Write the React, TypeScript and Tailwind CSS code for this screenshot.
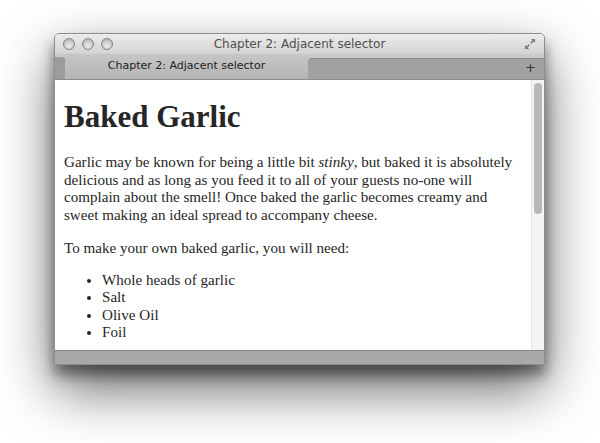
import React from "react";

function TrafficLight() {
  return (
    <span className="block w-[12px] h-[12px] rounded-full border border-[#858585] bg-[radial-gradient(circle_at_50%_70%,#eeeeee,#a9a9a9)]" />
  );
}

function ResizeIcon() {
  return (
    <svg width="12" height="12" viewBox="0 0 12 12" className="block">
      <path d="M7 1h4v4L9.6 3.6 7.4 5.8 6.2 4.6 8.4 2.4z" fill="#7a7a7a" />
      <path d="M5 11H1V7l1.4 1.4 2.2-2.2 1.2 1.2-2.2 2.2z" fill="#7a7a7a" />
    </svg>
  );
}

export default function App() {
  return (
    <div className="w-[600px] h-[443px] bg-white pt-[33px] pl-[54px] overflow-hidden">
      <div className="w-[491px] h-[332px] flex flex-col rounded-t-[5px] border border-[#8d8d8d] shadow-[0_24px_55px_rgba(0,0,0,0.6),0_10px_14px_rgba(0,0,0,0.45)]">
        {/* Title bar */}
        <div className="relative h-[20px] flex items-center px-[8px] rounded-t-[5px] bg-gradient-to-b from-[#ececec] to-[#d3d3d3]">
          <div className="flex items-center gap-[7px]">
            <TrafficLight />
            <TrafficLight />
            <TrafficLight />
          </div>
          <div className="absolute inset-0 flex items-center justify-center text-[12px] text-[#4e4e4e] font-['DejaVu_Sans',sans-serif]">
            Chapter 2: Adjacent selector
          </div>
          <div className="ml-auto relative">
            <ResizeIcon />
          </div>
        </div>

        {/* Tab bar */}
        <div className="h-[25px] flex items-end bg-[#cbcbcb]">
          <div className="w-[10px] h-[22px] bg-[#9c9c9c] rounded-tr-[3px]" />
          <div className="w-[243px] h-[25px] flex items-center justify-center bg-gradient-to-b from-[#c6c6c6] to-[#b4b4b4] text-[11px] text-[#222] font-['DejaVu_Sans',sans-serif]">
            Chapter 2: Adjacent selector
          </div>
          <div className="flex-1 h-[21px] flex items-start justify-end pr-[8px] pt-[2px] bg-[#a1a1a1] border-t border-[#8a8a8a] rounded-tl-[4px]">
            <span className="text-[13px] leading-none text-[#333] font-['DejaVu_Sans',sans-serif]">+</span>
          </div>
        </div>

        {/* Content */}
        <div className="flex-1 flex bg-white border-t border-[#8c8c8c] overflow-hidden">
          <div className="flex-1 pl-[9px] pr-[6px] text-[#262626] font-['Liberation_Serif',serif]">
            <h1 className="mt-[19px] text-[31px] leading-[36px] font-bold">Baked Garlic</h1>
            <p className="mt-[19px] text-[15.1px] leading-[17.6px]">
              Garlic may be known for being a little bit <em>stinky</em>, but baked it is absolutely
              delicious and as long as you feed it to all of your guests no-one will complain about
              the smell! Once baked the garlic becomes creamy and sweet making an ideal spread to
              accompany cheese.
            </p>
            <p className="mt-[16px] text-[15.1px] leading-[17.6px]">
              To make your own baked garlic, you will need:
            </p>
            <ul className="mt-[14px] pl-[38px] text-[15.1px] leading-[17.5px] list-disc">
              <li>Whole heads of garlic</li>
              <li>Salt</li>
              <li>Olive Oil</li>
              <li>Foil</li>
            </ul>
          </div>
          <div className="w-[13px] bg-[#f4f4f4] border-l border-[#e2e2e2] pt-[3px] pl-[2px]">
            <div className="w-[8px] h-[131px] rounded-full bg-[#b8b8b8]" />
          </div>
        </div>

        {/* Status bar */}
        <div className="h-[14px] bg-[#a9a9a9] border-t border-[#858585]" />
      </div>
    </div>
  );
}
